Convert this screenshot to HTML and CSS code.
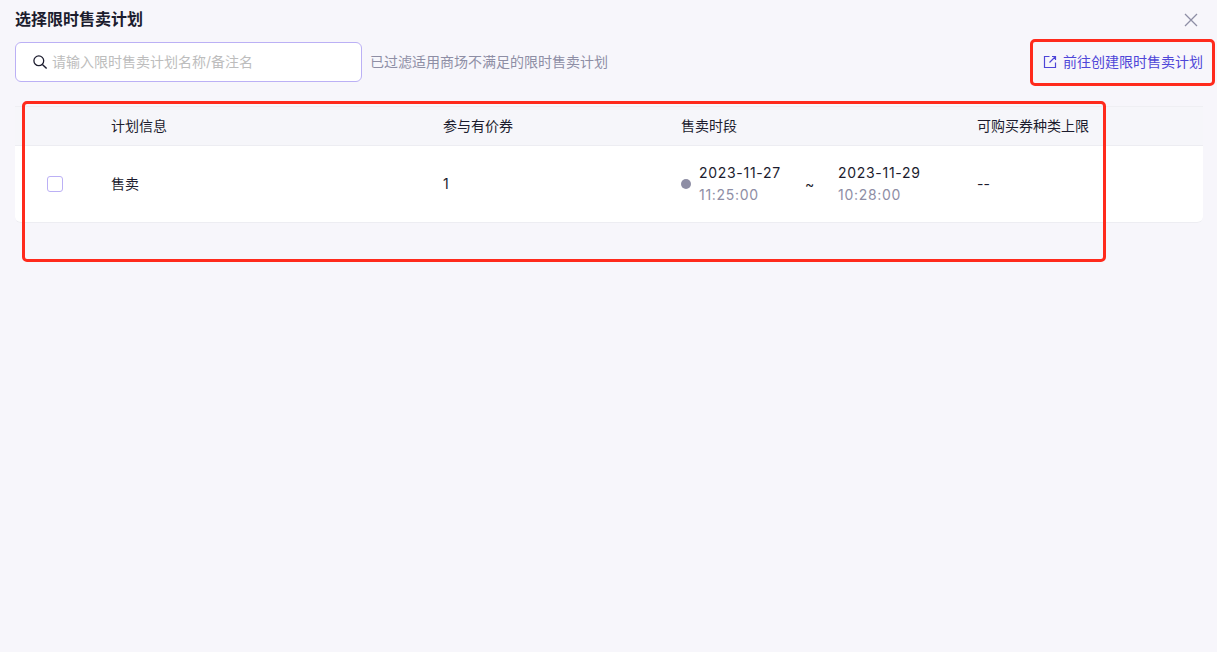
FILE: index.html
```html
<!DOCTYPE html>
<html lang="zh">
<head>
<meta charset="utf-8">
<title>选择限时售卖计划</title>
<link rel="stylesheet" href="styles.css">
</head>
<body>
<div class="dialog">
  <header class="title-row">
    <h1 class="title">选择限时售卖计划</h1>
    <svg class="close" width="14" height="14" viewBox="0 0 14 14"><path d="M1 1l12 12M13 1L1 13" fill="none" stroke="#8e8ea5" stroke-width="1.3"/></svg>
  </header>
  <div class="toolbar">
    <div class="search">
      <svg width="16" height="16" viewBox="0 0 16 16"><circle cx="6.8" cy="6.8" r="4.9" fill="none" stroke="#1c1c2e" stroke-width="1.3"/><path d="M10.4 10.4l4.2 4.2" fill="none" stroke="#1c1c2e" stroke-width="1.4"/></svg>
      <span class="placeholder">请输入限时售卖计划名称/备注名</span>
    </div>
    <span class="hint">已过滤适用商场不满足的限时售卖计划</span>
    <a class="create-link">
      <svg width="14" height="14" viewBox="0 0 14 14"><path d="M6.5 1.5h-5v11h11v-5M6.5 7.5l6-6M9 1.5h3.5V5" fill="none" stroke="#4f46d8" stroke-width="1.2"/></svg>
      <span>前往创建限时售卖计划</span>
    </a>
  </div>
  <div class="table">
    <div class="row head">
      <div class="cell c-check"></div>
      <div class="cell c-info">计划信息</div>
      <div class="cell c-count">参与有价券</div>
      <div class="cell c-time">售卖时段</div>
      <div class="cell c-limit">可购买券种类上限</div>
    </div>
    <div class="row body-row">
      <div class="cell c-check"><span class="checkbox"></span></div>
      <div class="cell c-info">售卖</div>
      <div class="cell c-count">1</div>
      <div class="cell c-time">
        <span class="dot"></span>
        <div class="stamp"><div class="date">2023-11-27</div><div class="clock">11:25:00</div></div>
        <span class="tilde">~</span>
        <div class="stamp"><div class="date">2023-11-29</div><div class="clock">10:28:00</div></div>
      </div>
      <div class="cell c-limit">--</div>
    </div>
  </div>
  <div class="mark mark-table"></div>
  <div class="mark mark-link"></div>
</div>
</body>
</html>
```
FILE: styles.css
```css
* { box-sizing: border-box; }
html, body { margin: 0; height: 100%; }
body {
  background: #f7f6fb;
  color: #1c1c2e;
  font-family: Inter, "Noto Sans CJK SC", sans-serif;
  font-size: 14px;
  line-height: 22px;
  overflow: hidden;
}
.dialog { position: relative; height: 652px; padding: 0 14px 0 15px; }
.title-row { display: flex; justify-content: space-between; align-items: center; height: 42px; padding: 0 5px 3px 0; }
.title { margin: 0; font-size: 16px; font-weight: 600; line-height: 22px; padding-bottom: 2px; }
.close { display: block; }
.toolbar { display: flex; align-items: center; height: 40px; }
.search {
  display: flex; align-items: center; gap: 4px;
  width: 347px; height: 40px; padding-left: 16px;
  background: #fff; border: 1px solid #bbb0f5; border-radius: 6px;
}
.placeholder { color: #bdbdbd; }
.hint { margin-left: 8px; color: #8e8ea5; }
.create-link { display: flex; align-items: center; gap: 6px; margin-left: auto; color: #4f46d8; }
.table { margin-top: 24px; border-top: 1px solid #efeff3; }
.row { display: flex; align-items: center; }
.head { height: 39px; border-bottom: 1px solid #ededf2; background: #f6f6fa; }
.body-row { height: 77px; background: #fff; border-bottom: 1px solid #ededf2; border-radius: 0 0 6px 6px; }
.cell { flex: none; }
.c-check { width: 96px; padding-left: 32px; }
.c-info { width: 332px; }
.c-count { width: 238px; }
.c-time { width: 296px; display: flex; align-items: center; }
.c-limit { flex: 1; }
.checkbox { display: block; width: 16px; height: 16px; background: #fff; border: 1px solid #bbb0f5; border-radius: 3px; }
.dot { width: 10px; height: 10px; border-radius: 50%; background: #8e8ea5; margin-right: 8px; }
.stamp { width: 106px; letter-spacing: 0.7px; }
.clock { color: #8e8ea5; }
.tilde { width: 33px; }
.mark { position: absolute; border: 3px solid #ff2a1c; border-radius: 5px; pointer-events: none; }
.mark-table { left: 22px; top: 101px; width: 1084px; height: 161px; }
.mark-link { left: 1030px; top: 39px; width: 185px; height: 47px; }
```
